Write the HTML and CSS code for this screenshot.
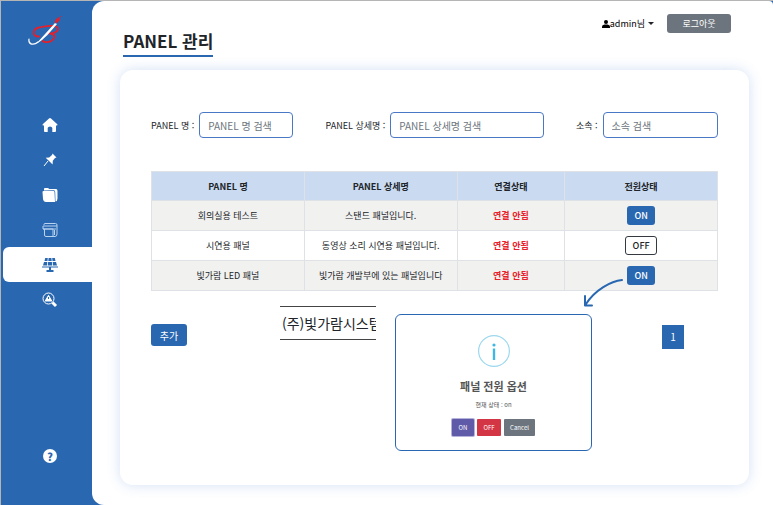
FILE: index.html
```html
<!DOCTYPE html>
<html lang="ko">
<head>
    <meta charset="UTF-8">
    <meta name="viewport" content="width=device-width, initial-scale=1.0">
    <title>PANEL 관리</title>
    <link rel="stylesheet" href="styles.css">
</head>
<body>
    <div class="wrapper">
        <!-- 사이드 메뉴 -->
        <nav class="sidebar">
            <a href="#" class="logo" aria-label="홈">
                <svg width="36" height="32" viewBox="0 0 36 32" fill="none" stroke-linecap="round">
                    <path d="M11 20.500C4 21 4 13 11 11.500C18 9.500 30 8.500 30 13C30 16.500 24 17.500 21 17.500C26 17.500 27.500 20 25.500 23C23 26.500 17 27 14.500 25" stroke="#e3202b" stroke-width="1.800"/>
                    <path d="M1 23C0 29 6 29.500 10 26" stroke="#fff" stroke-width="1.200"/>
                    <path d="M8 28L27 7L29 8C22 16 17 23 8 28Z" fill="#fff"/>
                    <path d="M27.500 6.500C27 4 29 2 31 2C32 4 30.500 6.500 27.500 6.500Z" fill="#e3202b" stroke="#e3202b"/>
                    <path d="M31.500 1.500L33 0" stroke="#e3202b"/>
                </svg>
            </a>
            <ul class="menu">
                <li><a href="#" aria-label="홈">
                    <svg width="16" height="16" viewBox="0 0 16 16" fill="currentColor"><path d="M8 1Q8.500 1 9 1.500L15.300 7.200Q16 8.500 14.700 8.500H14V14Q14 15 13 15H10.300V11Q10 9.500 8 9.500T5.700 11V15H3Q2 15 2 14V8.500H1.300Q0 8.500 .7 7.200L7 1.500Q7.500 1 8 1Z"/></svg>
                </a></li>
                <li><a href="#" aria-label="고정">
                    <svg width="16" height="16" viewBox="0 0 16 16" fill="currentColor"><path d="M10.500 1.500L14.500 5.500L13 6L10.800 8.800L10.600 12.500L3.700 5.700L7.200 5.400L10 3Z"/><path d="M6 9L2 14" stroke="currentColor" stroke-width="1"/></svg>
                </a></li>
                <li><a href="#" aria-label="폴더">
                    <svg width="16" height="16" viewBox="0 0 16 16" fill="currentColor"><path d="M.5 5Q.5 4 1.500 4H11.500Q12.500 4 12.500 5L13 15H4Q1.500 15 1 12Z"/><path d="M2 3.500V2Q2 1 3 1H6L7.300 2H14Q15.500 2 15.500 4V11.500Q15.500 14 13.500 14.500L13.200 5Q13 3.300 12 3.300Z"/></svg>
                </a></li>
                <li class="dim"><a href="#" aria-label="화면">
                    <svg width="16" height="16" viewBox="0 0 16 16" fill="none" stroke="currentColor" stroke-width="1"><path d="M2 3V2.500Q2 1.500 3 1.500H13.500Q15 1.500 15 3V12Q15 14.500 13 14.500H4Q2.500 14.500 2.500 13V7"/><path d="M1 4H15M1 4V7H11V14M1 7H14M12.500 8V13"/></svg>
                </a></li>
                <li class="active"><a href="#" aria-label="패널">
                    <svg width="16" height="16" viewBox="0 0 16 16" fill="currentColor"><path d="M3.200 1H5.800L5.500 4H2.500ZM6.600 1H9.400L9.700 4H6.300ZM10.200 1H12.800L13.500 4H10.500ZM2 5H5.300L5 8.500H1ZM6.100 5H9.900L10.200 8.500H5.800ZM10.700 5H14L15 8.500H11Z"/><path d="M0 9.500H16V10.500H9V13H11.500V15H4.500V13H7V10.500H0Z"/></svg>
                </a></li>
                <li><a href="#" aria-label="오류 조회">
                    <svg width="16" height="16" viewBox="0 0 16 16" fill="none" stroke="currentColor"><circle cx="6.500" cy="6.500" r="5.500"/><path d="M6.500 3.300L9.800 9H3.200Z" fill="currentColor"/><path d="M6.500 5V7" stroke="#2967b1"/><path d="M10.500 10.500L14 14" stroke-width="3"/></svg>
                </a></li>
            </ul>
            <a href="#" class="help" aria-label="도움말">?</a>
        </nav>

        <main class="main">
            <header class="header">
                <h1>PANEL 관리</h1>
                <div class="user">
                    <button type="button" class="user-menu">
                        <svg width="8" height="8" viewBox="0 0 8 8"><circle cx="4" cy="2" r="2"/><path d="M0 8V6.500Q0 5 2.500 4.500H5.500Q8 5 8 6.500V8Z"/></svg>admin님<span class="caret"></span>
                    </button>
                    <button type="button" class="btn-logout">로그아웃</button>
                </div>
            </header>

            <section class="card">
                <form class="search">
                    <div class="field field-name">
                        <label for="panelName">PANEL 명 :</label>
                        <input type="text" id="panelName" placeholder="PANEL 명 검색">
                    </div>
                    <div class="field field-detail">
                        <label for="panelDetail">PANEL 상세명 :</label>
                        <input type="text" id="panelDetail" placeholder="PANEL 상세명 검색">
                    </div>
                    <div class="field field-group">
                        <label for="panelGroup">소속 :</label>
                        <input type="text" id="panelGroup" placeholder="소속 검색">
                    </div>
                </form>

                <table class="panel-table">
                    <thead>
                        <tr>
                            <th class="col-wide">PANEL 명</th>
                            <th class="col-wide">PANEL 상세명</th>
                            <th>연결상태</th>
                            <th class="col-wide">전원상태</th>
                        </tr>
                    </thead>
                    <tbody>
                        <tr>
                            <td>회의실용 테스트</td>
                            <td>스탠드 패널입니다.</td>
                            <td class="disconnected">연결 안됨</td>
                            <td><button type="button" class="power on">ON</button></td>
                        </tr>
                        <tr>
                            <td>시연용 패널</td>
                            <td>동영상 소리 시연용 패널입니다.</td>
                            <td class="disconnected">연결 안됨</td>
                            <td><button type="button" class="power off">OFF</button></td>
                        </tr>
                        <tr>
                            <td>빛가람 LED 패널</td>
                            <td>빛가람 개발부에 있는 패널입니다</td>
                            <td class="disconnected">연결 안됨</td>
                            <td class="with-arrow">
                                <button type="button" class="power on">ON</button>
                                <svg class="arrow" width="42" height="30" viewBox="0 0 42 30" fill="none" stroke="#2967b1" stroke-width="2" stroke-linecap="round" stroke-linejoin="round"><path d="M39 2C28 3 12 12 3 26M2 18V27.500H9"/></svg>
                            </td>
                        </tr>
                    </tbody>
                </table>

                <div class="bottom">
                    <button type="button" class="btn-add">추가</button>
                    <div class="ticker">(주)빛가람시스템</div>
                    <div class="popup">
                        <svg class="info" width="32" height="32" viewBox="0 0 32 32" fill="none"><circle cx="16" cy="16" r="15.400" stroke="#9bd8ed" stroke-width="1.200"/><path d="M16 13.500V25" stroke="#3fb7e2" stroke-width="2.400"/><circle cx="16" cy="10" r="1.600" fill="#3fb7e2"/></svg>
                        <h2>패널 전원 옵션</h2>
                        <p>현재 상태 : on</p>
                        <div class="popup-buttons">
                            <button type="button" class="popup-on">ON</button>
                            <button type="button" class="popup-off">OFF</button>
                            <button type="button" class="popup-cancel">Cancel</button>
                        </div>
                    </div>
                    <a href="#" class="page">1</a>
                </div>
            </section>
        </main>
    </div>
</body>
</html>
```

FILE: styles.css
```css
* {
    box-sizing: border-box;
}

body {
    margin: 0;
    background-color: #2967b1;
    font-family: "Noto Sans CJK KR", sans-serif;
    font-size: 9px;
    color: #212529;
}

button, input {
    font-family: inherit;
}

button {
    padding: 0;
    border: none;
    cursor: pointer;
}

a {
    color: inherit;
    text-decoration: none;
}

svg {
    display: block;
}

.wrapper {
    display: flex;
    min-height: 100vh;
    border-top: 1px solid #b5b5b5;
    border-left: 1px solid #b5b5b5;
}

/* 사이드 메뉴 */
.sidebar {
    display: flex;
    flex-direction: column;
    flex: 0 0 91px;
    color: #fff;
}

.logo {
    margin: 15px 0 0 27px;
    height: 59px;
}

.menu {
    list-style: none;
    margin: 32px 0 0;
    padding: 0 0 0 2px;
}

.menu a {
    display: flex;
    align-items: center;
    height: 35px;
    padding-left: 39px;
}

.menu .dim {
    color: #b8d2f0;
}

.menu .active a {
    background-color: #fff;
    color: #2967b1;
    border-radius: 6px 0 0 6px;
}

.help {
    display: flex;
    align-items: center;
    justify-content: center;
    width: 14px;
    height: 14px;
    margin: auto 0 42px 42px;
    border-radius: 50%;
    background-color: #fff;
    color: #2967b1;
    font-size: 11px;
    font-weight: 900;
}

/* 본문 */
.main {
    flex: 1;
    min-width: 0;
    padding: 0 24px 20px 28px;
    background-color: #fff;
    border-radius: 12px 4px 0 12px;
}

.header {
    display: flex;
    justify-content: space-between;
    align-items: flex-start;
    height: 69px;
    padding: 13px 18px 0 3px;
}

h1 {
    margin: 13px 0 0;
    border-bottom: 2px solid #2967b1;
    font-size: 17px;
    font-weight: 700;
    line-height: 28px;
}

.user {
    display: flex;
    align-items: center;
    gap: 13px;
}

.user-menu {
    display: flex;
    align-items: center;
    background: none;
    font-size: 9px;
}

.caret {
    margin-left: 3px;
    border: 3px solid transparent;
    border-top-color: #212529;
    border-bottom: none;
}

.btn-logout {
    width: 64px;
    height: 19px;
    border-radius: 3px;
    background-color: #6c757d;
    color: #fff;
    font-size: 9px;
}

.card {
    min-height: 414px;
    padding: 42px 31px 34px 31px;
    border-radius: 13px;
    background-color: #fff;
    box-shadow: 0 0 14px rgba(41, 103, 205, 0.2);
}

/* 검색 */
.search {
    display: flex;
    justify-content: space-between;
    gap: 32px;
    margin-bottom: 33px;
}

.field {
    display: flex;
    align-items: center;
    gap: 5px;
    white-space: nowrap;
}

.field-name {
    flex: 0 1 142px;
}

.field-detail {
    flex: 0 1 218px;
}

.field-group {
    flex: 0 1 142px;
}

.field input {
    flex: 1;
    width: 0;
    min-width: 0;
    height: 26px;
    padding: 0 8px;
    border: 1px solid #4a78c4;
    border-radius: 4px;
    font-size: 10px;
    color: #212529;
}

.field input::placeholder {
    color: #6c757d;
}

/* 패널 목록 */
.panel-table {
    width: 100%;
    border-collapse: collapse;
    table-layout: fixed;
    text-align: center;
}

.panel-table th,
.panel-table td {
    height: 30px;
    padding: 0;
    border: 1px solid #dee2e6;
}

.panel-table th {
    height: 29px;
    background-color: #c9daf1;
    font-weight: 700;
}

.panel-table .col-wide {
    width: 27%;
}

.panel-table tbody tr:nth-child(odd) {
    background-color: #f1f1f0;
}

.panel-table .disconnected {
    color: #e8212b;
    font-weight: 700;
}

.power {
    height: 19px;
    border-radius: 3px;
    font-size: 9px;
    font-weight: 500;
    vertical-align: middle;
}

.power.on {
    width: 28px;
    background-color: #2967b1;
    color: #fff;
}

.power.off {
    width: 32px;
    border: 1px solid #343a40;
    background-color: #fff;
    color: #212529;
}

.panel-table .with-arrow {
    position: relative;
}

/* 버튼에서 팝업으로 이어지는 화살표 */
.arrow {
    position: absolute;
    top: 17px;
    left: 18px;
}

/* 하단 */
.bottom {
    display: flex;
    align-items: flex-start;
    margin-top: 15px;
}

.btn-add {
    width: 36px;
    height: 22px;
    margin-top: 18px;
    border-radius: 3px;
    background-color: #2967b1;
    color: #fff;
    font-size: 10px;
}

.ticker {
    width: 96px;
    margin-left: 93px;
    padding-left: 2px;
    border-top: 1px solid #444;
    border-bottom: 1px solid #444;
    font-size: 14px;
    line-height: 32px;
    white-space: nowrap;
    overflow: hidden;
}

.popup {
    display: flex;
    flex-direction: column;
    align-items: center;
    width: 197px;
    margin: 8px 0 0 19px;
    padding: 20px 0 14px;
    border: 1px solid #2967b1;
    border-radius: 6px;
    color: #545454;
}

.popup h2 {
    margin: 10px 0 0;
    font-size: 11px;
    font-weight: 700;
    line-height: 18px;
}

.popup p {
    margin: 4px 0 8px;
    font-size: 6px;
    line-height: 12px;
}

.popup-buttons {
    display: flex;
    gap: 3px;
}

.popup-buttons button {
    height: 17px;
    border-radius: 1px;
    color: #fff;
    font-size: 6px;
}

.popup-buttons .popup-on {
    width: 22px;
    background-color: #5f5ba8;
    box-shadow: 0 0 0 1px #b5b2dc;
}

.popup-buttons .popup-off {
    width: 24px;
    background-color: #d33545;
}

.popup-buttons .popup-cancel {
    width: 31px;
    background-color: #6c757d;
}

.page {
    width: 22px;
    height: 24px;
    margin: 19px 34px 0 auto;
    background-color: #2967b1;
    color: #fff;
    font-size: 10px;
    line-height: 24px;
    text-align: center;
}
```
